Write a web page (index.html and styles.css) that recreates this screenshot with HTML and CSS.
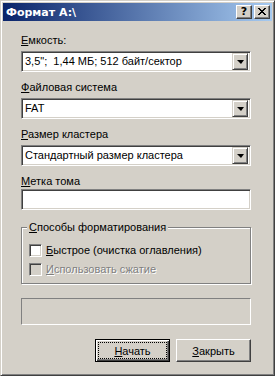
FILE: index.html
```html
<!DOCTYPE html>
<html lang="ru">
<head>
    <meta charset="UTF-8">
    <link rel="stylesheet" href="styles.css">
    <title>Формат A:\</title>
</head>
<body>
    <div class="window">
        <div class="titlebar">
            <span class="title">Формат A:\</span>
            <div class="caption-buttons">
                <span class="cap-btn help">?</span>
                <span class="cap-btn close">
                    <svg width="8" height="7" viewBox="0 0 8 7" shape-rendering="crispEdges">
                        <path d="M0 0h2v1h-2zM6 0h2v1h-2zM1 1h2v1h-2zM5 1h2v1h-2zM2 2h4v1h-4zM3 3h2v1h-2zM2 4h4v1h-4zM1 5h2v1h-2zM5 5h2v1h-2zM0 6h2v1h-2zM6 6h2v1h-2z" fill="#000"/>
                    </svg>
                </span>
            </div>
        </div>

        <div class="content">
            <label class="field-label"><u>Е</u>мкость:</label>
            <div class="combo">
                <span class="combo-text">3,5";  1,44 МБ; 512 байт/сектор</span>
                <span class="drop"><i class="arrow"></i></span>
            </div>

            <label class="field-label"><u>Ф</u>айловая система</label>
            <div class="combo">
                <span class="combo-text">FAT</span>
                <span class="drop"><i class="arrow"></i></span>
            </div>

            <label class="field-label"><u>Р</u>азмер кластера</label>
            <div class="combo">
                <span class="combo-text">Стандартный размер кластера</span>
                <span class="drop"><i class="arrow"></i></span>
            </div>

            <label class="field-label label-tight"><u>М</u>етка тома</label>
            <div class="edit"></div>

            <div class="group">
                <span class="legend"><u>С</u>пособы форматирования</span>
                <div class="check">
                    <span class="box"></span>
                    <span><u>Б</u>ыстрое (очистка оглавления)</span>
                </div>
                <div class="check disabled">
                    <span class="box"></span>
                    <span><u>И</u>спользовать сжатие</span>
                </div>
            </div>

            <div class="progress"></div>

            <div class="buttons">
                <button class="btn default"><span class="focus"><u>Н</u>ачать</span></button>
                <button class="btn"><u>З</u>акрыть</button>
            </div>
        </div>
    </div>
</body>
</html>
```

FILE: styles.css
```css
*{
    box-sizing: border-box;
}

html, body{
    margin: 0;
    padding: 0;
}

body{
    font-family: "Liberation Sans", Arial, sans-serif;
    font-size: 11px;
    color: #000;
    background: #d4d0c8;
}

.window{
    width: 275px;
    height: 376px;
    background: #d4d0c8;
    border: 1px solid;
    border-color: #d4d0c8 #404040 #404040 #d4d0c8;
    box-shadow: inset 1px 1px 0 #fff, inset -1px -1px 0 #808080;
    padding: 2px;
}

.titlebar{
    height: 18px;
    display: flex;
    align-items: center;
    justify-content: space-between;
    padding: 0 2px 0 3px;
    background: linear-gradient(to right, #0a246a, #a6caf0);
}

.title{
    color: #fff;
    font-family: "DejaVu Sans", sans-serif;
    font-weight: bold;
    font-size: 11px;
    line-height: 13px;
}

.caption-buttons{
    display: flex;
    gap: 2px;
}

.cap-btn{
    width: 16px;
    height: 14px;
    display: flex;
    align-items: center;
    justify-content: center;
    background: #d4d0c8;
    border: 1px solid;
    border-color: #fff #404040 #404040 #fff;
    box-shadow: inset -1px -1px 0 #808080;
}

.help{
    font-family: "DejaVu Sans", sans-serif;
    font-weight: bold;
    font-size: 11px;
    line-height: 11px;
    padding-bottom: 1px;
}

.close svg{
    display: block;
    margin-bottom: 1px;
}

.content{
    padding: 0 0 0 18px;
}

.field-label{
    display: block;
    line-height: 13px;
    margin-top: 9px;
    margin-bottom: 4px;
}

.field-label:first-child{
    margin-top: 13px;
}

.label-tight{
    margin-top: 9px;
    margin-bottom: 1px;
}

u{
    text-decoration: underline;
    text-underline-offset: 1px;
}

.combo, .edit{
    width: 230px;
    height: 21px;
    background: #fff;
    border: 1px solid;
    border-color: #808080 #fff #fff #808080;
    box-shadow: inset 1px 1px 0 #404040, inset -1px -1px 0 #d4d0c8;
}

.combo{
    display: flex;
    align-items: center;
    justify-content: space-between;
    padding: 2px;
}

.combo-text{
    white-space: pre;
    line-height: 13px;
    padding-left: 1px;
}

.drop{
    width: 16px;
    height: 17px;
    display: flex;
    align-items: center;
    justify-content: center;
    background: #d4d0c8;
    border: 1px solid;
    border-color: #d4d0c8 #404040 #404040 #d4d0c8;
    box-shadow: inset 1px 1px 0 #fff, inset -1px -1px 0 #808080;
}

.arrow{
    display: block;
    width: 0;
    height: 0;
    border-left: 4px solid transparent;
    border-right: 3px solid transparent;
    border-top: 4px solid #000;
}

.group{
    position: relative;
    width: 230px;
    height: 57px;
    margin-top: 17px;
    border: 1px solid #808080;
    box-shadow: inset 1px 1px 0 #fff, 1px 1px 0 #fff;
    padding: 16px 0 0 7px;
}

.legend{
    position: absolute;
    top: -7px;
    left: 5px;
    line-height: 13px;
    padding: 0 2px 0 2px;
    background: #d4d0c8;
}

.check{
    display: flex;
    align-items: center;
    gap: 4px;
    height: 13px;
    line-height: 13px;
    margin-bottom: 6px;
}

.box{
    width: 13px;
    height: 13px;
    background: #fff;
    border: 1px solid;
    border-color: #808080 #fff #fff #808080;
    box-shadow: inset 1px 1px 0 #404040, inset -1px -1px 0 #d4d0c8;
}

.disabled{
    color: #808080;
    text-shadow: 1px 1px 0 #fff;
}

.disabled .box{
    background: #d4d0c8;
}

.progress{
    width: 230px;
    height: 27px;
    margin-top: 14px;
    border: 1px solid;
    border-color: #808080 #fff #fff #808080;
}

.buttons{
    width: 230px;
    display: flex;
    justify-content: flex-end;
    gap: 6px;
    margin-top: 14px;
}

.btn{
    width: 75px;
    height: 23px;
    padding: 0;
    font-family: inherit;
    font-size: 11px;
    color: #000;
    background: #d4d0c8;
    border: 1px solid;
    border-color: #fff #404040 #404040 #fff;
    box-shadow: inset -1px -1px 0 #808080;
    border-radius: 0;
}

.btn.default{
    border: 1px solid #000;
    box-shadow: inset 1px 1px 0 #fff, inset -1px -1px 0 #404040, inset -2px -2px 0 #808080;
    padding: 3px;
}

.focus{
    display: flex;
    align-items: center;
    justify-content: center;
    width: 100%;
    height: 100%;
    outline: 1px dotted #000;
    outline-offset: 0;
}
```
